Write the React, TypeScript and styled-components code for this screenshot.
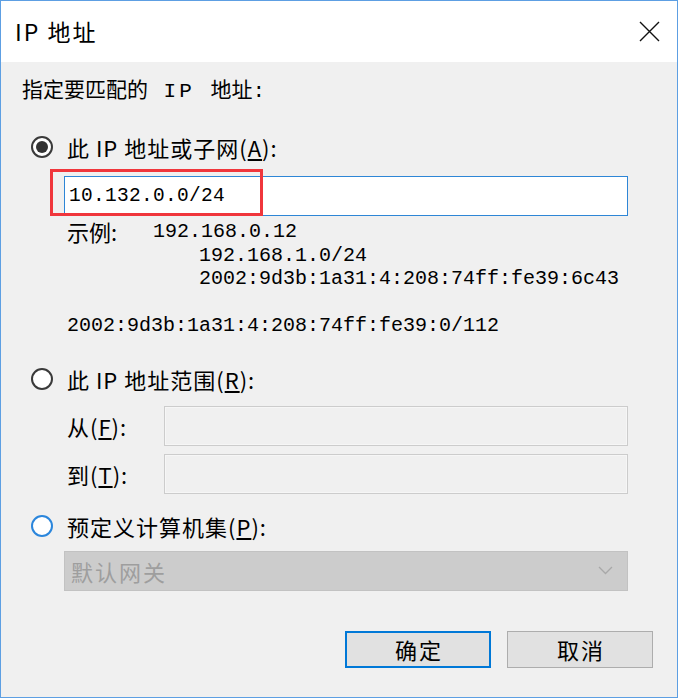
import React from "react";
import styled, { createGlobalStyle } from "styled-components";

const GlobalStyle = createGlobalStyle`
  html, body { margin: 0; padding: 0; background: #ffffff; }
  body { font-family: "Noto Sans CJK SC", "Noto Sans", sans-serif; color: #000; }
`;

const CJK = `"Noto Sans CJK SC", "Noto Sans", sans-serif`;
const MONO = `"Liberation Mono", "Noto Sans CJK SC", monospace`;

const Window = styled.div`
  box-sizing: border-box;
  width: 678px;
  height: 698px;
  border: 1px solid #5d9fe3;
  display: flex;
  flex-direction: column;
  background: #f0f0f0;
`;

const TitleBar = styled.div`
  flex: none;
  height: 61px;
  background: #ffffff;
  display: flex;
  align-items: center;
  justify-content: space-between;
  padding-left: 14px;
`;

const Title = styled.div`
  font-family: ${CJK};
  font-size: 23px;
  letter-spacing: 2px;
  line-height: 1;
`;

const CloseButton = styled.div`
  width: 56px;
  height: 61px;
  display: flex;
  align-items: center;
  justify-content: center;
`;

const Body = styled.div`
  flex: 1;
  display: flex;
  flex-direction: column;
  padding: 17px 0 0 21px;
`;

const Intro = styled.div`
  font-family: ${MONO};
  font-size: 21px;
  line-height: 26px;
  white-space: pre;
`;

const Wide = styled.span`
  letter-spacing: 3px;
`;

const RadioRow = styled.div<{ $top: number }>`
  display: flex;
  align-items: center;
  height: 26px;
  margin-top: ${(p) => p.$top}px;
`;

const Radio = styled.div<{ $checked?: boolean; $focus?: boolean }>`
  box-sizing: border-box;
  width: 22px;
  height: 22px;
  border-radius: 50%;
  margin: 0 14px 0 9px;
  border: 2px solid ${(p) => (p.$focus ? "#2b86dc" : "#3a3a3a")};
  background: #ffffff;
  display: flex;
  align-items: center;
  justify-content: center;
  &::after {
    content: "";
    display: ${(p) => (p.$checked ? "block" : "none")};
    width: 12px;
    height: 12px;
    border-radius: 50%;
    background: #333333;
  }
`;

const Label = styled.span`
  font-family: ${CJK};
  font-size: 22px;
  letter-spacing: 1px;
  line-height: 26px;
  white-space: pre;
`;

const InputWrap = styled.div`
  position: relative;
  margin: 16px 0 0 42px;
  width: 564px;
  height: 40px;
`;

const TextInput = styled.div`
  box-sizing: border-box;
  width: 100%;
  height: 100%;
  border: 1px solid #2e86d6;
  background: #ffffff;
  display: flex;
  align-items: center;
  padding-left: 4px;
  font-family: ${MONO};
  font-size: 19.5px;
  letter-spacing: 0.3px;
`;

const Highlight = styled.div`
  position: absolute;
  left: -14px;
  top: -7px;
  width: 213px;
  height: 47px;
  box-sizing: border-box;
  border: 3px solid #f0363c;
  pointer-events: none;
`;

const Examples = styled.div`
  margin: 4px 0 0 45px;
  font-family: ${MONO};
  font-size: 20px;
  line-height: 23.5px;
`;

const ExampleLine = styled.div<{ $indent: number }>`
  display: flex;
  align-items: center;
  height: 23.5px;
  padding-left: ${(p) => p.$indent}px;
  white-space: pre;
`;

const ExampleLabel = styled.span`
  width: 86px;
  font-family: ${CJK};
  font-size: 22px;
`;

const RangeGrid = styled.div`
  margin: 14px 0 0 45px;
  display: grid;
  grid-template-columns: 97px 464px;
  grid-auto-rows: 40px;
  row-gap: 8px;
  align-items: center;
`;

const DisabledInput = styled.div`
  box-sizing: border-box;
  height: 40px;
  border: 1px solid #cccccc;
  box-shadow: inset 0 0 0 1px #f6f6f6;
  background: #f0f0f0;
`;

const Combo = styled.div`
  box-sizing: border-box;
  margin: 12px 0 0 42px;
  width: 564px;
  height: 40px;
  background: #cccccc;
  border: 1px solid #c2c2c2;
  display: flex;
  align-items: center;
  justify-content: space-between;
  padding: 0 14px 0 6px;
  font-family: ${CJK};
  font-size: 22px;
  letter-spacing: 2px;
  color: #9e9e9e;
`;

const Footer = styled.div`
  margin-top: 40px;
  display: flex;
  justify-content: flex-end;
  gap: 16px;
  padding-right: 24px;
`;

const Button = styled.div<{ $primary?: boolean }>`
  box-sizing: border-box;
  width: 146px;
  height: 37px;
  background: #e1e1e1;
  border: ${(p) => (p.$primary ? "2px solid #0078d7" : "1px solid #adadad")};
  display: flex;
  align-items: center;
  justify-content: center;
  font-family: ${CJK};
  font-size: 22px;
  letter-spacing: 2px;
  text-indent: 2px;
`;

export default function App() {
  return (
    <>
      <GlobalStyle />
      <Window>
        <TitleBar>
          <Title>IP 地址</Title>
          <CloseButton>
            <svg width="21" height="21" viewBox="0 0 21 21">
              <path d="M1 1 L20 20 M20 1 L1 20" stroke="#111" strokeWidth="1.4" fill="none" />
            </svg>
          </CloseButton>
        </TitleBar>
        <Body>
          <Intro>
            指定要匹配的<Wide> IP </Wide>地址<Wide>:</Wide>
          </Intro>

          <RadioRow $top={29}>
            <Radio $checked />
            <Label>
              此 IP 地址或子网(<u>A</u>):
            </Label>
          </RadioRow>
          <InputWrap>
            <TextInput>10.132.0.0/24</TextInput>
            <Highlight />
          </InputWrap>
          <Examples>
            <ExampleLine $indent={0}>
              <ExampleLabel>示例:</ExampleLabel>192.168.0.12
            </ExampleLine>
            <ExampleLine $indent={132}>192.168.1.0/24</ExampleLine>
            <ExampleLine $indent={132}>2002:9d3b:1a31:4:208:74ff:fe39:6c43</ExampleLine>
            <ExampleLine $indent={0}> </ExampleLine>
            <ExampleLine $indent={0}>2002:9d3b:1a31:4:208:74ff:fe39:0/112</ExampleLine>
          </Examples>

          <RadioRow $top={28}>
            <Radio />
            <Label>
              此 IP 地址范围(<u>R</u>):
            </Label>
          </RadioRow>
          <RangeGrid>
            <Label>
              从(<u>F</u>):
            </Label>
            <DisabledInput />
            <Label>
              到(<u>T</u>):
            </Label>
            <DisabledInput />
          </RangeGrid>

          <RadioRow $top={19}>
            <Radio $focus />
            <Label>
              预定义计算机集(<u>P</u>):
            </Label>
          </RadioRow>
          <Combo>
            <span>默认网关</span>
            <svg width="15" height="9" viewBox="0 0 15 9">
              <polyline points="1,1 7.5,7.5 14,1" stroke="#a8a8a8" strokeWidth="1.3" fill="none" />
            </svg>
          </Combo>

          <Footer>
            <Button $primary>确定</Button>
            <Button>取消</Button>
          </Footer>
        </Body>
      </Window>
    </>
  );
}
